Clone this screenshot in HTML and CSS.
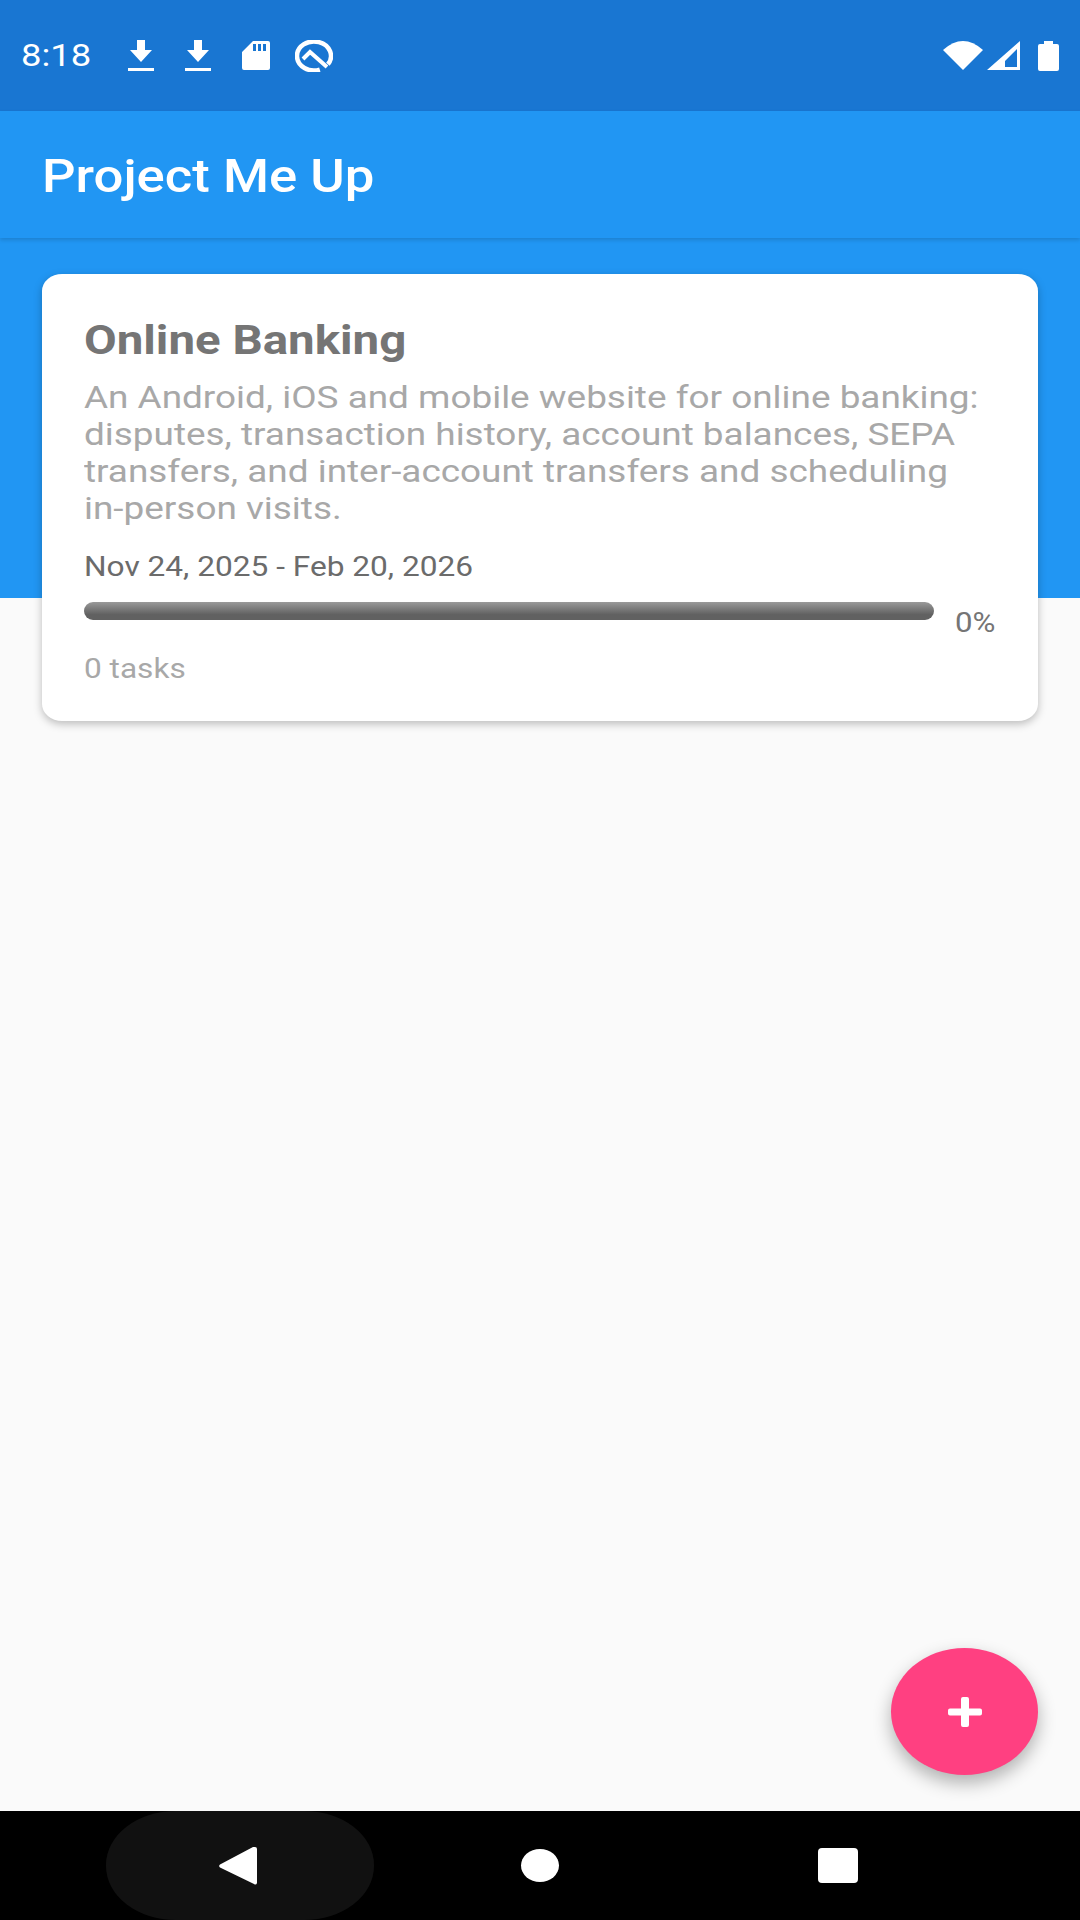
FILE: index.html
```html
<!DOCTYPE html>
<html>
<head>
    <title>Project Me Up</title>
    <link rel="stylesheet" href="styles.css">
</head>
<body>
    <div class="screen">
        <!-- status bar -->
        <div class="status-bar">
            <div class="clock-box"><span class="clock wide">8:18</span></div>
            <svg class="icon-download" viewBox="0 0 26 31"><path d="M9 0h8v10h7L13 22 2 10h7zM0 28h26v3H0z"/></svg>
            <svg class="icon-download icon-download-2" viewBox="0 0 26 31"><path d="M9 0h8v10h7L13 22 2 10h7zM0 28h26v3H0z"/></svg>
            <svg class="icon-sd" viewBox="0 0 28 29"><path fill-rule="evenodd" d="M11 0h15a2 2 0 0 1 2 2v25a2 2 0 0 1-2 2H2a2 2 0 0 1-2-2V11zM11 3v7h3V3zM16 3v7h3V3zM21 3v7h3V3z"/></svg>
            <svg class="icon-q" viewBox="0 0 38 32"><path d="M24.800 29.600A17 14.500 0 1 1 32.900 24.300" fill="none" stroke="#fff" stroke-width="4.500"/><path d="M8 19l7-7 17 15" fill="none" stroke="#fff" stroke-width="4"/></svg>
            <div class="status-right">
                <svg class="icon-wifi" viewBox="0 0 40 29"><path d="M0 9Q20-9 40 9L20 29z"/></svg>
                <svg class="icon-signal" viewBox="0 0 33 29"><path fill-rule="evenodd" d="M33 0v29H0zM30 8 18 20v6h12z"/></svg>
                <svg class="icon-battery" viewBox="0 0 21 30"><path d="M6 0h9v3h4a2 2 0 0 1 2 2v23a2 2 0 0 1-2 2H2a2 2 0 0 1-2-2V5a2 2 0 0 1 2-2h4z"/></svg>
            </div>
        </div>

        <div class="app-bar">
            <span class="app-title wide">Project Me Up</span>
        </div>

        <!-- project list -->
        <div class="content">
            <div class="card">
                <div class="card-title wide">Online Banking</div>
                <div class="card-desc wide">An Android, iOS and mobile website for online banking: disputes, transaction history, account balances, SEPA transfers, and inter-account transfers and scheduling in-person visits.</div>
                <div class="card-date wide">Nov 24, 2025 - Feb 20, 2026</div>
                <div class="progress-row">
                    <div class="progress-bar"></div>
                    <span class="progress-pct wide">0%</span>
                </div>
                <div class="card-tasks wide">0 tasks</div>
            </div>
            <button class="fab">
                <svg viewBox="0 0 34 30"><path d="M13 2a2 2 0 0 1 2-2h4a2 2 0 0 1 2 2v9.500h11a2 2 0 0 1 2 2v3a2 2 0 0 1-2 2H21V28a2 2 0 0 1-2 2h-4a2 2 0 0 1-2-2v-9.500H2a2 2 0 0 1-2-2v-3a2 2 0 0 1 2-2h11z"/></svg>
            </button>
        </div>

        <!-- navigation bar -->
        <div class="nav-bar">
            <div class="nav-back">
                <svg viewBox="0 0 38 38"><path d="M36 0a2 2 0 0 1 2 2v34a2 2 0 0 1-3 1L1 20.500a2 2 0 0 1 0-3L34 0z"/></svg>
            </div>
            <div class="nav-home"></div>
            <div class="nav-recent"></div>
        </div>
    </div>
</body>
</html>
```
FILE: styles.css
```css
* {
    box-sizing: border-box;
}
body {
    margin: 0;
    font-family: Roboto, "Liberation Sans", sans-serif;
}
svg {
    display: block;
    fill: #fff;
}
.screen {
    width: 1080px;
    height: 1920px;
    display: flex;
    flex-direction: column;
    overflow: hidden;
}
/* the whole capture is stretched sideways, text has to follow */
.wide {
    transform: scaleX(1.157);
    transform-origin: left center;
}

/* status bar */
.status-bar {
    height: 111px;
    flex: none;
    background-color: #1976d2;
    display: flex;
    align-items: center;
    padding: 0 21px 0 21px;
    color: white;
}
.clock-box {
    width: 107px;
}
.clock {
    display: inline-block;
    font-size: 31.500px;
}
.icon-download {
    width: 26px;
    height: 31px;
}
.icon-download-2 {
    margin-left: 31px;
}
.icon-sd {
    width: 28px;
    height: 29px;
    margin-left: 31px;
}
.icon-q {
    width: 38px;
    height: 32px;
    margin-left: 25px;
}
.status-right {
    margin-left: auto;
    display: flex;
    align-items: center;
}
.icon-wifi {
    width: 40px;
    height: 29px;
}
.icon-signal {
    width: 33px;
    height: 29px;
    margin-left: 4px;
}
.icon-battery {
    width: 21px;
    height: 30px;
    margin-left: 18px;
}

/* app bar */
.app-bar {
    height: 127px;
    flex: none;
    background-color: #2196f3;
    display: flex;
    align-items: center;
    padding: 3px 0 0 42px;
    box-shadow: 0 2px 4px rgba(0, 0, 0, 0.15);
    position: relative;
    z-index: 1;
}
.app-title {
    font-size: 45.500px;
    font-weight: 500;
    color: white;
}

/* content */
.content {
    flex: 1;
    position: relative;
    background: linear-gradient(#2196f3 360px, #fafafa 360px);
    padding: 36px 42px 0;
}
.card {
    background-color: white;
    border-radius: 20px / 17px;
    height: 447px;
    padding: 42px 42px 0;
    box-shadow: 0 3px 8px rgba(0, 0, 0, 0.25);
}
.card-title {
    font-size: 41px;
    font-weight: 700;
    line-height: 48px;
    color: #757575;
}
.card-desc {
    width: 776px;
    font-size: 31.900px;
    line-height: 37px;
    color: #a8a8a8;
    margin-top: 15px;
}
.card-date {
    font-size: 27.350px;
    line-height: 34px;
    color: #6b6b6b;
    margin-top: 23px;
}
.progress-row {
    display: flex;
    margin-top: 18px;
}
.progress-bar {
    width: 850px;
    height: 18px;
    border-radius: 9px;
    background: linear-gradient(#9a9a9a, #616161 70%);
}
.progress-pct {
    font-size: 27px;
    line-height: 32px;
    color: #757575;
    margin-left: 21px;
    margin-top: 5px;
}
.card-tasks {
    font-size: 27.300px;
    line-height: 34px;
    color: #a8a8a8;
    margin-top: 13px;
}
.fab {
    position: absolute;
    left: 891px;
    top: 1410px;
    width: 147px;
    height: 127px;
    border: none;
    border-radius: 50%;
    background-color: #ff4081;
    display: flex;
    align-items: center;
    justify-content: center;
    padding: 0;
    box-shadow: 0 8px 18px rgba(0, 0, 0, 0.3);
}
.fab svg {
    width: 34px;
    height: 30px;
}

/* navigation bar */
.nav-bar {
    height: 109px;
    flex: none;
    background-color: black;
    display: flex;
    align-items: center;
    padding-left: 106px;
}
.nav-back {
    width: 268px;
    height: 109px;
    border-radius: 70px / 54px;
    background-color: #111;
    display: flex;
    align-items: center;
    padding-left: 113px;
}
.nav-back svg {
    width: 38px;
    height: 38px;
}
.nav-home {
    width: 38px;
    height: 33px;
    border-radius: 50%;
    background-color: white;
    margin-left: 147px;
}
.nav-recent {
    width: 40px;
    height: 35px;
    border-radius: 4px;
    background-color: white;
    margin-left: 259px;
}
```
